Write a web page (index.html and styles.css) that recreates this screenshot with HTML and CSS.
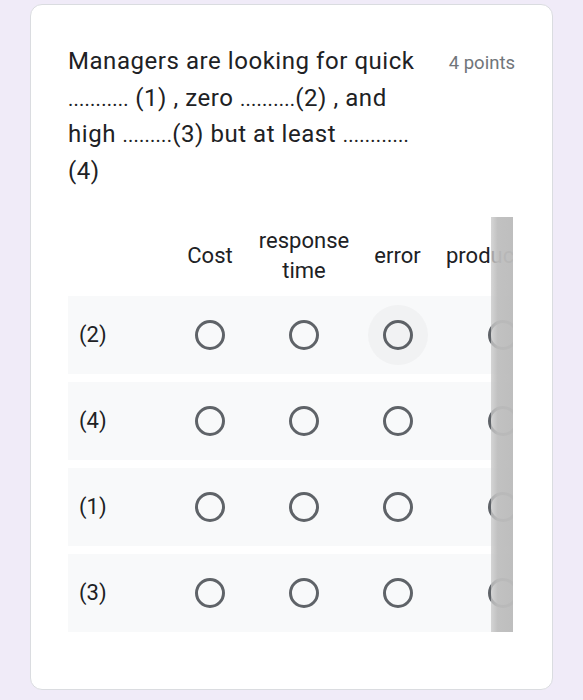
FILE: index.html
```html
<!DOCTYPE html>
<html>
<head>
<meta charset="utf-8">
<link rel="stylesheet" href="styles.css">
</head>
<body>
<div class="card">
  <div class="question">
    <div class="title">Managers are looking for quick <span class="dots">...........</span> (1) , zero <span class="dots">..........</span>(2) , and high <span class="dots">.........</span>(3) but at least <span class="dots">............</span> (4)</div>
    <div class="points">4 points</div>
  </div>
  <div class="grid-wrap">
    <div class="grid">
      <div class="head-row">
        <div class="cell label"></div>
        <div class="cell col">Cost</div>
        <div class="cell col">response time</div>
        <div class="cell col">error</div>
        <div class="cell col last">productivity</div>
      </div>
      <div class="row">
        <div class="cell label">(2)</div>
        <div class="cell col"><span class="radio"></span></div>
        <div class="cell col"><span class="radio"></span></div>
        <div class="cell col"><span class="radio hover"></span></div>
        <div class="cell col last"><span class="radio"></span></div>
      </div>
      <div class="row">
        <div class="cell label">(4)</div>
        <div class="cell col"><span class="radio"></span></div>
        <div class="cell col"><span class="radio"></span></div>
        <div class="cell col"><span class="radio"></span></div>
        <div class="cell col last"><span class="radio"></span></div>
      </div>
      <div class="row">
        <div class="cell label">(1)</div>
        <div class="cell col"><span class="radio"></span></div>
        <div class="cell col"><span class="radio"></span></div>
        <div class="cell col"><span class="radio"></span></div>
        <div class="cell col last"><span class="radio"></span></div>
      </div>
      <div class="row">
        <div class="cell label">(3)</div>
        <div class="cell col"><span class="radio"></span></div>
        <div class="cell col"><span class="radio"></span></div>
        <div class="cell col"><span class="radio"></span></div>
        <div class="cell col last"><span class="radio"></span></div>
      </div>
    </div>
    <div class="scroll-shadow"></div>
  </div>
</div>
</body>
</html>
```

FILE: styles.css
```css
html, body {
  margin: 0;
  padding: 0;
  background: #f0ebf8;
  font-family: Roboto, "Liberation Sans", sans-serif;
  color: #202124;
}
body {
  padding: 4px 0 10px 30px;
}
.card {
  box-sizing: border-box;
  width: 523px;
  height: 686px;
  background: #fff;
  border: 1px solid #dadce0;
  border-radius: 12px;
  padding: 38px 37px 0 37px;
}
.question {
  display: flex;
  align-items: baseline;
  gap: 18px;
}
.title {
  flex: 1;
  font-size: 24px;
  line-height: 36.7px;
  letter-spacing: 0.55px;
}
.dots {
  font-size: 20px;
  line-height: 1;
  letter-spacing: 0.25px;
}
.points {
  font-size: 18.5px;
  color: #70757a;
  white-space: nowrap;
}
.grid-wrap {
  position: relative;
  width: 445px;
  margin-top: 27px;
  overflow: hidden;
}
.grid {
  display: grid;
  grid-template-columns: 95px 94px 94px 93px max-content;
  row-gap: 8px;
  width: max-content;
}
.head-row, .row {
  display: contents;
}
.cell {
  display: flex;
  align-items: center;
  justify-content: center;
  box-sizing: border-box;
  font-size: 22px;
}
.head-row .cell {
  height: 79px;
  line-height: 30px;
  text-align: center;
  padding: 0 1px;
  margin-bottom: -8px;
}
.head-row .col.last {
  padding: 0 2px;
}
.row .cell {
  height: 78px;
  background: #f8f9fa;
}
.cell.label {
  justify-content: flex-start;
  padding-left: 11px;
}
.radio {
  position: relative;
  box-sizing: border-box;
  width: 30px;
  height: 30px;
  border: 3px solid #5f6368;
  border-radius: 50%;
}
.radio.hover::before {
  content: "";
  position: absolute;
  left: -18px;
  top: -18px;
  width: 60px;
  height: 60px;
  border-radius: 50%;
  background: rgba(60, 64, 67, 0.035);
}
.scroll-shadow {
  position: absolute;
  top: 0;
  bottom: 0;
  right: 0;
  width: 22px;
  background: linear-gradient(to right, rgba(200,200,200,0.75), rgba(190,190,190,0.95) 30%, rgba(188,188,188,0.97));
}
```
